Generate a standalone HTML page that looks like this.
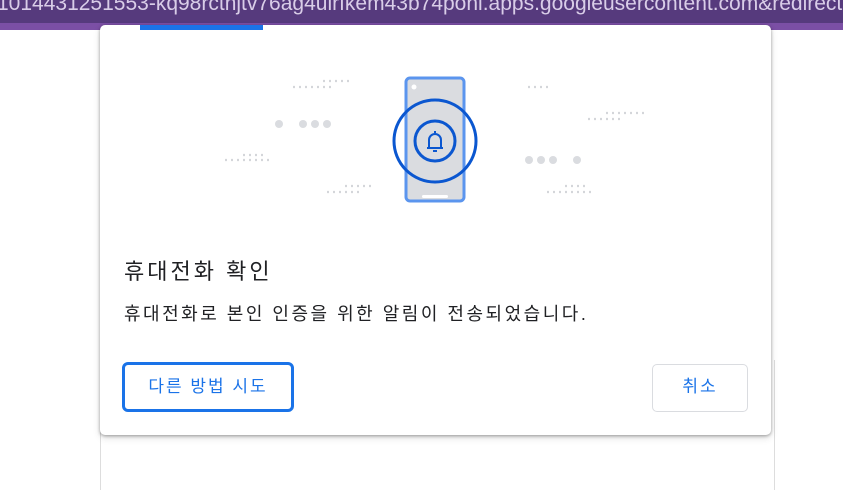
<!DOCTYPE html>
<html><head><meta charset="utf-8"><style>
body{margin:0;width:843px;height:482px;overflow:hidden;background:#fff;font-family:"Liberation Sans","Noto Sans CJK KR",sans-serif;position:relative}
.top{position:absolute;left:0;top:0;width:843px;height:23px;background:#563a7d;overflow:hidden}
.top span{position:absolute;left:-3px;top:-8px;font-size:21px;color:#d9cde8;white-space:nowrap}
.band{position:absolute;left:0;top:23px;width:843px;height:7px;background:#7b4fa5}
.bg{position:absolute;left:100px;top:360px;width:673px;height:130px;border-left:1px solid #ddd;border-right:1px solid #ddd}
.card{position:absolute;left:100px;top:25px;width:671px;height:410px;background:#fff;border-radius:5px;box-shadow:0 1px 3px rgba(0,0,0,.35),0 3px 8px rgba(0,0,0,.12)}
.prog{position:absolute;left:40px;top:0;width:123px;height:5px;background:#1a73e8}
h1{position:absolute;left:24px;top:229px;margin:0;font-size:22px;font-weight:normal;color:#202124;letter-spacing:3px}
p{position:absolute;left:24px;top:275px;margin:0;font-size:18px;color:#202124;letter-spacing:2.5px}
.b1{position:absolute;left:22px;top:337px;width:166px;height:44px;border:3px solid #1a73e8;border-radius:6px;color:#1a73e8;font-size:17px;text-align:center;line-height:44px;letter-spacing:2px}
.b2{position:absolute;left:552px;top:339px;width:94px;height:46px;border:1px solid #dadce0;border-radius:5px;color:#1a73e8;font-size:17px;text-align:center;line-height:44px;letter-spacing:2px}
</style></head><body>
<div class="top"><span>1014431251553-kq98rcthjtv76ag4uirfkem43b74poni.apps.googleusercontent.com&amp;redirect</span></div>
<div class="band"></div>
<div class="bg"></div>
<div class="card">
<div class="prog"></div>
<svg style="position:absolute;left:100px;top:35px" width="460" height="150" viewBox="200 60 460 150">
<g fill="#dadce0">
<circle cx="279" cy="124" r="4"/><circle cx="303" cy="124" r="4"/><circle cx="315" cy="124" r="4"/><circle cx="327" cy="124" r="4"/>
<circle cx="529" cy="160" r="4"/><circle cx="541" cy="160" r="4"/><circle cx="553" cy="160" r="4"/><circle cx="577" cy="160" r="4"/>
</g>
<g stroke="#d4d6da" stroke-width="2.2" stroke-dasharray="2 4">
<line x1="323" y1="81" x2="350" y2="81"/><line x1="293" y1="87" x2="333" y2="87"/>
<line x1="243" y1="155" x2="266" y2="155"/><line x1="225" y1="160" x2="272" y2="160"/>
<line x1="345" y1="186" x2="372" y2="186"/><line x1="327" y1="192" x2="361" y2="192"/>
<line x1="528" y1="87" x2="550" y2="87"/>
<line x1="606" y1="113" x2="646" y2="113"/><line x1="588" y1="119" x2="622" y2="119"/>
<line x1="565" y1="186" x2="587" y2="186"/><line x1="547" y1="192" x2="591" y2="192"/>
</g>
<rect x="406" y="78" width="58" height="123" rx="4" fill="#dadce0" stroke="#5b95ee" stroke-width="3"/>
<circle cx="414" cy="87" r="2.5" fill="#fff"/>
<rect x="422" y="195" width="26" height="3" rx="1.5" fill="#fff"/>
<circle cx="435" cy="141" r="41" fill="none" stroke="#0b57d0" stroke-width="3"/>
<circle cx="435" cy="141" r="20" fill="none" stroke="#0b57d0" stroke-width="3"/>
<path d="M427 148h16M429 148v-8a6 6 0 0 1 12 0v8M435 131v2M433 151h4" fill="none" stroke="#0b57d0" stroke-width="2" stroke-linejoin="round"/>
</svg>
<h1>휴대전화 확인</h1>
<p>휴대전화로 본인 인증을 위한 알림이 전송되었습니다.</p>
<div class="b1">다른 방법 시도</div>
<div class="b2">취소</div>
</div>
</body></html>
